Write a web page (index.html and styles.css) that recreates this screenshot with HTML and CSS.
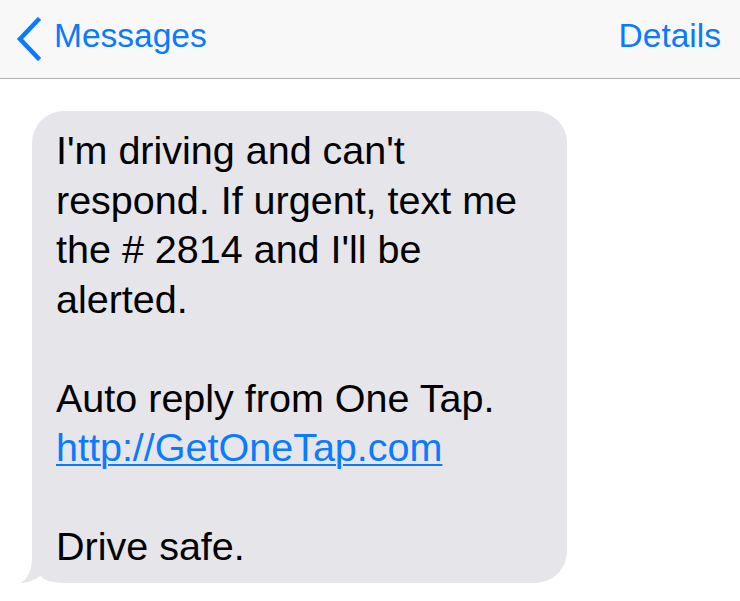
FILE: index.html
```html
<!DOCTYPE html>
<html>
<head>
<meta charset="utf-8">
<link rel="stylesheet" href="styles.css">
</head>
<body>
<header class="nav">
  <a class="back">
    <svg class="chev" width="28" height="44" viewBox="0 0 28 44"><path d="M24 3 L6 22 L24 41" fill="none" stroke="#0a7aff" stroke-width="4.5" stroke-linecap="square"/></svg>
    <span>Messages</span>
  </a>
  <a class="details">Details</a>
</header>
<main class="thread">
  <div class="bubble">
    <svg class="tail" width="44" height="30" viewBox="0 0 44 30"><path d="M12 0 L12 6 Q12 22 1 30 Q11 29.5 20 23 Q27 30 44 30 L44 0 Z" fill="#e5e5ea"/></svg>
    <p>I'm driving and can't respond. If urgent, text me the # 2814 and I'll be alerted.</p>
    <p>Auto reply from One Tap.<br><a class="link">http://GetOneTap.com</a></p>
    <p>Drive safe.</p>
  </div>
</main>
</body>
</html>
```
FILE: styles.css
```css
html, body { margin: 0; padding: 0; background: #fff; }
body { font-family: "Liberation Sans", Arial, sans-serif; width: 740px; height: 601px; overflow: hidden; }
.nav {
  height: 79px;
  box-sizing: border-box;
  background: #f8f8f8;
  border-bottom: 1px solid #b2b2b2;
  display: flex;
  align-items: center;
  justify-content: space-between;
  padding: 0 19px 6px 14px;
  color: #0a7aff;
  font-size: 33.5px;
}
.back { display: flex; align-items: center; gap: 12px; }
.chev { display: block; margin-top: 6px; }
.thread { padding: 32px 0 0 32px; }
.bubble {
  position: relative;
  width: 535px;
  box-sizing: border-box;
  background: #e5e5ea;
  border-radius: 32px;
  padding: 15px 24px 11px 24px;
  font-size: 39.5px;
  line-height: 49.5px;
  color: #000;
}
.bubble p { position: relative; margin: 0 0 49.5px 0; }
.bubble p:last-of-type { margin-bottom: 0; }
.link { color: #0a7aff; text-decoration: underline; text-decoration-thickness: 2px; text-underline-offset: 3px; }
.tail { position: absolute; left: -12px; bottom: 0; }
```
